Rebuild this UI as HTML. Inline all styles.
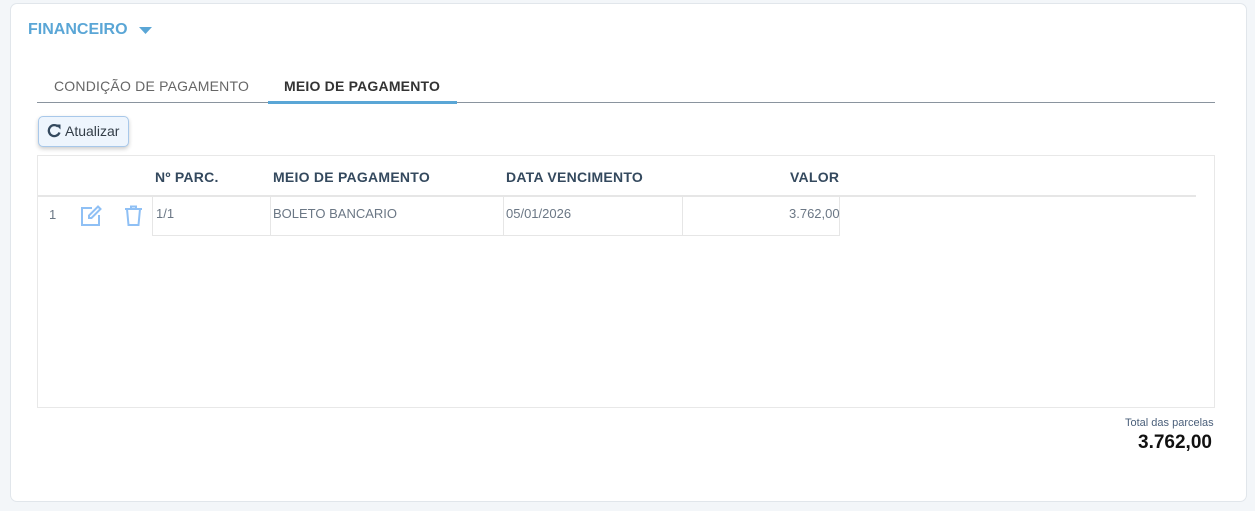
<!DOCTYPE html>
<html><head><meta charset="utf-8"><style>
*{box-sizing:border-box;margin:0;padding:0}
body{width:1255px;height:511px;background:#f3f6f9;font-family:"Liberation Sans",sans-serif;position:relative;overflow:hidden}
.card{position:absolute;left:10px;top:3px;width:1237px;height:499px;background:#fff;border:1px solid #e1e6eb;border-radius:7px}
.abs{position:absolute;white-space:nowrap}
.h{left:28px;top:21px;font-size:16px;font-weight:bold;color:#5aa6d6}
.tab{top:78px;font-size:14px;letter-spacing:0.2px}
.line{position:absolute;left:37px;top:102px;width:1178px;height:1px;background:#8a949e}
.act{position:absolute;left:268px;top:101px;width:189px;height:3px;background:#5aa6d6}
.btn{left:38px;top:116px;width:91px;height:31px;background:#eef5fd;border:1px solid #a8c8ea;border-radius:5px;box-shadow:0 2px 4px rgba(0,0,0,.2);font-size:14px;color:#333d47;padding:6px 0 0 26px}
.tbl{position:absolute;left:37px;top:155px;width:1178px;height:253px;border:1px solid #e8e8e8}
.th{top:169px;font-size:14px;font-weight:bold;color:#34495e;letter-spacing:0.25px}
.td{top:206px;font-size:13px;color:#6b7785}
.hl{position:absolute;left:38px;top:195px;width:1158px;height:2px;background:#e6e6e6}
.vc{position:absolute;top:196px;height:40px;width:1px;background:#e6e6e6}
.bl{position:absolute;left:152px;top:235px;width:688px;height:1px;background:#e6e6e6}
</style></head><body>
<div class="card"></div>
<div class="abs h">FINANCEIRO</div>
<svg class="abs" style="left:139px;top:27px" width="13" height="8"><path d="M0 0h13L6.5 7z" fill="#5aa6d6"/></svg>
<div class="abs tab" style="left:54px;color:#666">CONDIÇÃO DE PAGAMENTO</div>
<div class="abs tab" style="left:284px;font-weight:bold;color:#333">MEIO DE PAGAMENTO</div>
<div class="line"></div><div class="act"></div>
<div class="abs btn">Atualizar</div>
<svg class="abs" style="left:46px;top:122px" width="17" height="17" viewBox="0 0 17 17"><path d="M13.5 10.5A5.5 5.5 0 1 1 12 4.5" fill="none" stroke="#34495e" stroke-width="2.3"/><path d="M9.5 2.5h5v5z" fill="#34495e"/></svg>
<div class="tbl"></div>
<div class="abs th" style="left:155px">Nº PARC.</div>
<div class="abs th" style="left:273px">MEIO DE PAGAMENTO</div>
<div class="abs th" style="left:506px">DATA VENCIMENTO</div>
<div class="abs th" style="left:790px">VALOR</div>
<div class="hl"></div>
<div class="vc" style="left:152px"></div><div class="vc" style="left:270px"></div><div class="vc" style="left:503px"></div><div class="vc" style="left:682px"></div><div class="vc" style="left:839px"></div>
<div class="bl"></div>
<div class="abs td" style="left:49px;top:207px">1</div>
<svg class="abs" style="left:80px;top:205px" width="22" height="22" viewBox="0 0 22 22"><path d="M12 3H2v17h17V10" fill="none" stroke="#8fc0f5" stroke-width="2"/><path d="M18 1.5l2.5 2.5-9 9H9v-2.5z" fill="none" stroke="#8fc0f5" stroke-width="2"/></svg>
<svg class="abs" style="left:123px;top:205px" width="22" height="22" viewBox="0 0 22 22"><path d="M2 4h17M8 4V1.5h5V4M4 4l1.5 16h10L17 4" fill="none" stroke="#8fc0f5" stroke-width="2"/></svg>
<div class="abs td" style="left:156px">1/1</div>
<div class="abs td" style="left:273px">BOLETO BANCARIO</div>
<div class="abs td" style="left:506px">05/01/2026</div>
<div class="abs td" style="left:789px">3.762,00</div>
<div class="abs" style="left:1125px;top:417px;font-size:11px;color:#4a5f7a">Total das parcelas</div>
<div class="abs" style="left:1138px;top:432px;font-size:19px;font-weight:bold;color:#111">3.762,00</div>
</body></html>
